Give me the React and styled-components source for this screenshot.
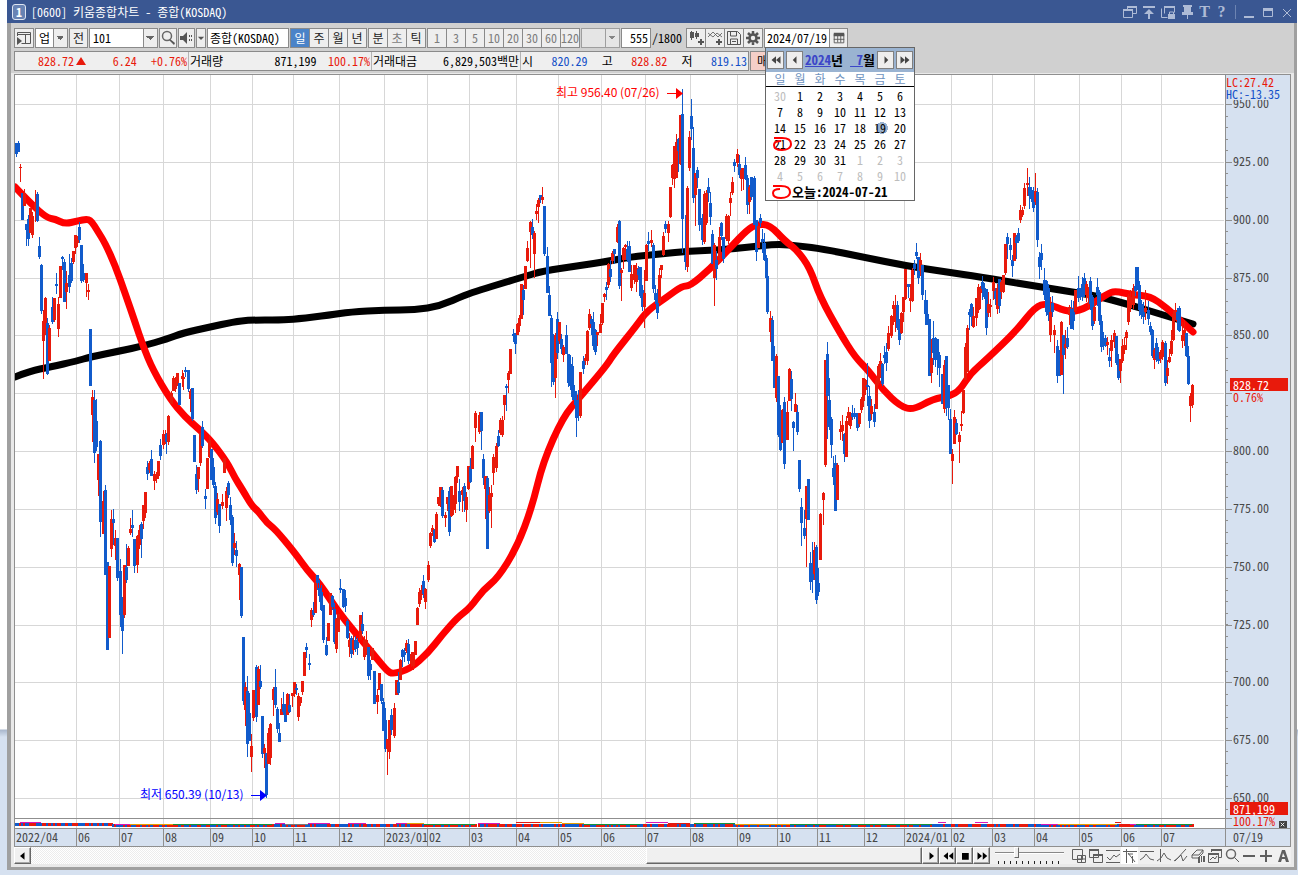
import { useState } from 'react';
import styled, { createGlobalStyle, css } from 'styled-components';

// d = down day, u = up day: x, high, body top, body bottom, low
const CANDLES = `
d16,143,143,154,157 d18,141,143,152,152 u20,164,167,168,182 d22,193,193,220,220 u24,189,193,206,206 d26,224,224,230,246
d28,215,219,239,246 u30,208,208,233,233 u32,212,216,235,238 u35,190,203,210,222 d37,192,194,221,222 d39,237,246,257,259
d41,264,265,311,314 u43,310,321,341,379 u45,297,298,331,335 d47,318,323,374,375 u49,325,328,361,361 d52,297,307,322,324
u54,298,298,320,322 d56,273,284,286,294 u58,297,304,329,337 u60,266,266,298,298 d62,256,257,259,270 d64,259,262,302,302
u66,271,283,292,309 d69,254,275,287,293 d71,258,263,281,283 u73,251,251,262,264 u75,235,235,248,254 u77,236,240,243,247
d79,222,227,240,243 d81,245,245,281,283 d83,264,273,280,282 u86,273,273,283,297 u88,284,290,292,300 d90,329,329,386,386
u92,390,397,415,442 d94,390,400,453,463 d96,399,421,447,451 u98,454,454,480,496 d100,440,441,522,537 u103,491,501,534,534
d105,485,490,575,575 d107,562,562,650,650 u109,566,566,638,638 u111,510,519,549,557 d113,509,519,523,545 u115,530,538,546,560
d117,538,538,578,581 d120,559,571,615,627 d122,597,597,631,654 u124,565,565,615,618 d126,544,567,580,583 u128,546,548,566,566
u130,518,529,533,535 d132,510,525,528,537 d134,539,539,566,573 u137,535,536,565,573 u139,525,530,545,549 d141,522,524,539,558
u143,505,505,521,529 u145,492,492,513,518 d147,461,467,474,480 u149,461,463,470,473 d151,450,459,476,476 u154,471,474,481,490
u156,472,475,479,483 u158,461,461,476,479 d160,439,445,456,460 u163,430,434,445,449 u165,430,434,442,444 d166,433,434,442,454
u168,415,416,442,445 u171,391,393,404,404 u173,376,378,391,391 u175,377,379,389,392 u177,373,373,383,386 d179,383,383,405,405
u182,370,376,379,387 u183,373,377,379,390 d185,367,370,372,377 d188,370,370,389,392 u190,389,391,399,412 d192,388,388,419,421
d194,435,435,462,462 d196,465,474,490,494 u198,467,467,479,492 u200,433,433,463,466 d202,421,427,446,448 d205,489,496,499,509
u207,458,458,489,489 u209,435,440,457,458 d211,449,449,480,480 d213,458,467,485,488 d215,482,486,518,524 u217,493,499,512,515
d219,504,504,526,533 u222,494,502,506,509 u224,458,458,473,473 u226,487,491,508,521 d228,481,483,495,498 d230,497,505,520,525
d232,515,517,563,566 u234,533,543,548,555 d236,541,550,556,567 u239,563,564,575,600 d241,567,567,616,618 d243,637,637,701,705
u245,682,687,710,726 d247,676,691,744,757 d249,693,713,741,741 u251,734,746,757,772 u253,690,690,718,721 d256,665,667,717,722
u258,666,669,705,705 d260,665,681,687,689 d262,716,716,754,758 u264,744,748,753,768 d266,753,753,795,798 u268,728,733,764,764
u270,723,724,758,765 u273,687,689,700,716 d275,669,687,705,708 d277,707,709,729,733 d279,723,733,742,742 u281,698,709,715,715
d283,692,704,712,715 d285,704,712,722,722 u287,693,694,715,715 d289,694,705,712,713 u292,693,693,696,707 u294,682,682,694,697
d296,684,688,690,695 u298,693,696,717,721 u300,697,697,703,706 u302,681,681,692,695 u304,652,652,676,676 d306,643,647,650,658
d309,654,663,665,670 u311,608,610,620,627 d313,602,610,615,617 u315,575,583,613,613 d317,575,575,583,590 d319,580,588,596,602
d321,585,592,610,611 d323,605,605,640,643 d326,637,645,655,656 u328,623,623,641,641 u330,593,593,615,615 d332,595,596,607,610
d334,603,609,642,644 u336,618,619,649,653 u338,614,614,632,632 d340,579,588,590,593 d343,589,589,607,608 d345,590,598,606,612
d347,619,621,638,639 u349,633,640,647,657 d351,636,638,654,658 u353,634,640,650,655 d355,636,640,649,652 d357,638,642,648,655
u360,615,615,640,640 d362,612,624,631,634 u364,636,640,657,660 u366,631,640,652,655 d368,647,647,676,680 d370,660,664,670,680
u372,648,648,660,660 d374,671,671,704,704 u377,689,695,702,714 u379,673,673,690,690 d381,684,684,701,704 d383,698,702,731,731
d385,708,720,749,752 u387,739,739,749,775 u389,720,720,752,759 d391,709,715,730,735 u394,703,708,736,738 u396,680,680,695,695
d398,672,682,693,695 u400,659,660,680,680 d402,649,650,657,667 d404,648,652,655,662 u406,640,643,651,653 d408,639,644,661,664
u411,652,654,664,667 u413,652,652,666,670 u415,641,641,655,655 u417,607,608,625,625 u419,588,592,604,607 u421,585,590,595,600
d423,575,581,594,598 u425,588,589,602,609 u428,561,565,580,582 u430,532,533,546,548 u432,525,528,532,536 d434,529,530,542,543
u436,512,514,539,539 u438,497,497,504,506 u440,487,487,506,507 d442,487,490,516,518 u445,512,515,518,527 u447,497,497,504,511
d449,487,491,532,536 u451,486,486,516,517 u453,495,495,510,515 u455,476,477,504,513 u457,466,466,477,483 d459,479,491,502,511
u462,487,490,495,512 d464,483,486,501,512 u466,492,497,510,522 u468,466,466,489,490 d470,458,467,482,483 u472,445,446,469,469
u475,411,413,428,442 u479,412,415,432,434 d481,412,412,431,450 d483,454,459,478,485 u485,476,476,489,519 d487,476,478,549,549
u489,487,495,511,513 u491,485,493,497,528 u493,454,457,473,485 u496,443,446,468,472 d498,430,436,446,447 u500,418,420,433,435
u502,416,420,435,437 u504,395,395,405,420 d506,384,386,388,411 u508,371,373,380,393 u510,349,349,374,374 d513,329,334,336,342
d515,333,333,344,354 u517,323,324,335,335 u519,315,318,326,332 u521,284,284,319,319 d523,285,290,300,315 u525,266,266,289,289
u527,241,248,261,262 u530,221,222,232,268 d532,219,227,235,239 u534,231,233,254,278 u536,204,211,214,220 u538,198,200,207,223
d540,195,195,200,203 u542,187,197,200,204 d544,206,206,254,256 d547,247,256,293,293 d549,286,295,316,316 d551,315,318,363,387
d553,334,335,382,385 u555,333,335,378,398 d557,312,319,353,359 u559,322,322,341,344 d561,334,339,349,354 u563,345,347,355,362
d566,325,335,354,354 d568,354,354,383,387 d570,355,364,386,390 d572,357,366,397,400 d574,385,391,400,405 d576,391,400,418,437
d578,390,400,410,421 u580,372,372,416,418 d583,356,361,369,374 u585,354,358,361,365 u587,330,331,361,365 u589,309,314,328,330
d591,316,319,324,335 d593,312,322,346,350 d595,329,330,352,355 u597,332,332,335,346 u600,314,324,333,333 u602,303,303,323,325
u604,293,294,297,302 d606,282,287,290,300 u608,263,264,285,288 d610,260,269,277,282 u612,251,253,261,264 d614,249,249,254,264
u617,224,227,242,243 d619,220,221,286,289 u621,268,270,273,301 u623,247,248,260,269 u625,244,245,247,260 d627,241,249,260,262
d629,241,246,272,272 u631,265,274,288,291 u634,265,265,280,284 u636,263,268,282,292 d638,266,269,275,280 d640,267,267,296,298
d642,285,290,307,311 u644,270,293,307,328 u646,244,245,281,281 d648,232,241,244,251 u651,230,240,243,247 d653,243,245,289,293
d655,285,293,300,304 d657,289,298,313,319 u659,268,275,303,304 u661,265,265,270,278 u663,232,236,255,256 d665,221,224,229,233
u668,221,224,233,242 u670,187,187,217,218 u672,164,165,178,185 u674,146,146,179,188 u676,134,142,178,178 d678,138,139,151,172
u680,115,115,164,165 d682,89,114,219,253 d685,215,255,262,270 u687,186,188,267,272 u689,131,137,168,171 d691,99,116,129,140
d693,127,148,198,203 u695,173,173,195,226 d697,167,170,178,188 d699,189,189,225,231 d702,214,218,240,245 u704,191,194,242,244
u706,190,193,223,225 d708,178,187,193,202 d710,192,203,217,225 d712,230,234,264,264 u714,243,245,278,306 d716,251,260,269,280
u719,227,237,263,263 d721,222,223,236,240 d723,237,237,259,263 u726,214,216,239,241 u728,215,216,241,244 u730,192,198,203,216
u732,177,182,193,195 d734,159,162,166,172 u737,149,154,163,167 d739,155,164,175,178 u741,168,170,179,191 u743,168,168,179,190
d745,157,165,179,180 d747,175,178,205,214 u749,185,187,202,214 d751,177,177,197,200 d754,176,178,225,225 d756,220,220,252,261
u758,226,226,248,248 d760,214,218,223,227 d762,229,239,242,253 d764,233,243,260,261 d766,255,258,278,279 d767,266,276,312,314
u770,311,318,332,342 d772,316,320,361,361 d774,346,360,388,388 u776,354,356,398,402 d778,376,376,435,437 d780,405,410,450,451
u782,409,410,443,443 d784,397,402,464,469 u787,401,412,440,440 u789,368,369,401,401 d791,371,379,399,411 d793,421,422,428,451
u795,393,404,412,412 d797,405,412,432,435 d799,460,460,489,492 d801,498,507,523,546 d804,510,528,536,539 u806,486,486,519,567
d808,479,479,520,520 d810,552,563,582,590 d812,542,565,580,593 u814,542,550,574,580 d816,545,547,600,604 d818,568,583,592,596
u820,513,514,560,560 u823,492,493,500,525 u825,360,360,465,467 d827,342,354,396,439 d829,378,400,427,430 d831,417,419,445,458
d833,456,468,477,485 d835,455,463,511,511 u837,463,465,500,500 u840,421,429,432,440 u842,415,425,431,441 d844,433,434,454,462
u846,416,421,457,457 u848,407,412,418,425 u850,412,416,426,429 d852,405,413,417,420 d854,408,413,417,419 d857,413,413,428,431
u859,413,413,424,427 u861,397,399,410,413 u863,378,378,401,407 u865,379,380,390,395 d867,363,385,387,406 d869,386,396,421,428
u871,399,406,414,420 d874,404,412,422,427 u876,378,380,409,409 u878,364,366,383,385 u880,353,361,375,378 d882,363,364,384,386
d884,346,355,358,364 d886,343,352,363,371 u888,326,333,349,351 u891,315,316,336,338 u893,301,305,309,325 u895,295,305,322,332
d897,301,305,328,330 d899,319,325,340,345 u901,312,313,333,334 u903,297,297,312,322 u905,269,269,299,300 d908,284,284,287,298
u910,284,298,301,312 u912,268,270,301,302 d914,260,264,269,275 d916,243,252,256,259 d918,257,257,278,284 u920,253,260,271,276
d922,265,265,295,300 d925,290,300,314,325 d927,300,314,325,325 d929,319,319,376,376 u931,339,358,373,383 d933,321,338,353,365
d935,337,338,360,367 d937,339,339,360,375 d939,352,355,368,387 d942,374,374,404,404 u944,360,365,409,413 d946,356,356,408,416
d948,385,385,408,420 d950,409,419,454,454 u952,449,454,461,484 u954,410,417,444,444 d956,419,423,434,435 u959,432,435,442,463
u961,411,424,426,431 u963,390,390,413,414 u965,343,347,380,380 u967,325,328,372,372 d969,309,312,315,330 d971,303,304,317,326
u973,307,316,327,328 u976,298,298,318,326 u978,284,287,310,313 u980,286,288,293,309 d982,276,282,289,300 d984,283,288,297,299
d986,289,289,328,335 u988,292,304,313,317 u990,299,305,307,317 u993,277,282,291,300 d995,288,291,299,305 u997,284,288,309,314
d999,279,279,306,313 u1001,280,282,292,299 u1003,275,275,292,293 u1005,244,244,273,275 d1007,233,237,244,259 d1010,238,245,250,260
d1012,255,260,266,277 u1014,233,233,261,261 d1016,235,237,243,259 d1018,228,233,241,243 u1020,205,210,220,223 u1022,207,210,215,217
u1024,183,188,206,209 u1027,168,183,185,196 d1029,177,187,196,209 d1031,187,190,199,202 d1033,187,191,208,212 u1035,173,191,202,205
d1037,188,192,240,247 d1039,252,257,267,279 d1041,244,253,260,270 d1044,268,280,295,300 d1046,280,281,312,316 d1048,284,288,315,321
u1050,297,312,335,342 d1052,296,303,312,317 u1054,325,330,335,353 d1057,340,346,376,383 d1059,350,352,376,376 u1061,321,322,375,375
d1063,335,335,355,394 u1065,330,344,348,359 d1067,327,338,347,349 u1069,305,307,315,325 d1071,300,309,329,329 d1073,301,312,321,330
u1075,290,290,311,312 d1078,276,288,298,302 d1080,288,290,296,300 d1082,277,284,297,301 d1084,273,278,290,297 u1086,281,284,295,302
u1088,287,290,298,308 d1090,277,281,304,310 d1092,295,297,326,330 u1094,301,307,321,324 d1097,278,287,295,306 d1099,290,292,321,325
d1101,315,321,347,352 d1103,332,338,346,350 d1105,335,338,346,347 u1107,337,342,345,355 d1109,348,357,361,367 u1111,335,340,351,367
u1114,330,333,342,348 d1116,336,336,363,365 d1118,354,360,378,380 u1120,359,359,371,383 u1122,339,346,361,363 u1124,337,345,350,354
u1126,330,332,338,350 u1128,294,296,322,325 u1130,290,297,308,312 u1133,284,288,305,309 d1135,267,286,291,296 d1137,267,267,288,290
d1139,281,285,310,316 d1141,300,304,315,319 d1143,302,311,317,324 u1145,290,308,312,320 d1148,301,310,319,325 d1150,322,326,332,335
d1152,329,330,356,358 u1154,348,350,360,369 d1156,338,343,359,362 d1158,347,356,361,364 u1160,350,352,359,363 u1162,340,342,357,360
d1165,341,343,383,386 u1167,360,368,376,384 u1169,349,357,362,363 u1171,330,341,354,356 u1173,311,314,340,341 u1175,303,310,316,320
d1177,308,312,320,330 d1179,306,308,331,332 u1182,322,335,341,348 u1184,320,330,341,346 d1186,333,333,356,357 d1188,346,356,384,385
u1190,393,396,406,422 u1192,384,385,405,408
`
  .trim()
  .split(/\s+/)
  .map(entry => {
    const [x, high, top, bottom, low] = entry.slice(1).split(',').map(Number);
    return { up: entry[0] === 'u', x, high, top, bottom, low };
  });

const LONG_AVERAGE =
  '15,377 30,371 50,367 77,361 90,357 120,351 143,346 167,339 183,333 210,327 233,322 250,320 280,320 297,319 330,315 350,312 385,310 415,310 440,306 465,295 480,290 503,283 523,277 543,271 577,266 610,261 630,257 660,254 690,251 720,250 750,247 777,244 800,246 823,249 863,257 907,266 947,272 980,277 1023,284 1060,290 1097,296 1127,304 1160,314 1193,324';

const SHORT_AVERAGE =
  '15,187 30,203 47,218 55,219 65,224 77,221 88,219 92,222 97,230 105,243 115,265 125,293 135,322 143,346 153,370 170,399 185,417 200,430 212,442 227,462 235,478 242,489 252,506 258,511 267,523 275,529 295,553 307,570 320,584 337,610 353,630 370,650 387,671 393,674 410,669 428,653 442,635 458,617 470,608 483,590 498,578 517,547 532,507 543,462 563,417 580,397 607,365 613,355 637,325 647,311 667,297 682,286 690,286 710,269 730,248 747,230 757,224 770,225 785,241 797,250 810,268 820,297 840,333 855,357 868,370 883,390 900,406 913,410 933,399 950,396 960,390 970,374 987,359 1017,330 1035,307 1047,303 1067,312 1083,310 1107,294 1115,291 1133,295 1150,296 1167,308 1183,323 1193,332';

// rounds the corners of a point list with quadratic curves through the midpoints
function smoothPath(points) {
  const list = points.split(' ').map(p => p.split(',').map(Number));
  const last = list[list.length - 1];
  const curves = list.slice(1, -1).map(([x, y], i) => {
    const [nextX, nextY] = list[i + 2];
    return `Q${x} ${y} ${(x + nextX) / 2} ${(y + nextY) / 2}`;
  });
  return `M${list[0].join(' ')}${curves.join('')}L${last.join(' ')}`;
}

const MONTHS = [
  ['2022/04', 61], ['06', 43], ['07', 44], ['08', 47], ['09', 42], ['10', 41], ['11', 46], ['12', 45],
  ['2023/01', 43], ['02', 42], ['03', 47], ['04', 42], ['05', 43], ['06', 44], ['07', 45], ['08', 47],
  ['09', 40], ['10', 40], ['11', 47], ['12', 40], ['2024/01', 47], ['02', 41], ['03', 42], ['04', 45],
  ['05', 42], ['06', 40], ['07', 64],
];

const MONTH_LINES = MONTHS.slice(0, -1).reduce((xs, [, w]) => [...xs, (xs[xs.length - 1] || 15) + w], []);

const PRICES = [
  ['950.00', 104], ['925.00', 162], ['900.00', 220], ['875.00', 278], ['850.00', 335], ['', 393],
  ['800.00', 451], ['775.00', 509], ['750.00', 567], ['725.00', 625], ['700.00', 682], ['675.00', 740], ['650.00', 798],
];

const MINOR_TICKS = Array.from({ length: 64 }, (_, i) => Math.round(81 + i * 11.56));

// volume averages that run over the thin bars
const VOLUME_LINES = [
  [20, 41, 822, '#d816b8'], [115, 130, 824, '#d816b8'], [130, 173, 824, '#e8a000'], [173, 272, 824, '#149438'],
  [275, 285, 823, '#d816b8'], [285, 308, 824, '#777'], [308, 330, 823, '#d816b8'], [348, 366, 823, '#d816b8'],
  [396, 407, 823, '#d816b8'], [407, 424, 823, '#e8a000'], [424, 475, 824, '#149438'], [478, 500, 823, '#d816b8'],
  [516, 540, 822, '#e01a10'], [540, 562, 822, '#e8a000'], [562, 584, 823, '#e8a000'], [584, 640, 824, '#149438'],
  [646, 668, 822, '#d816b8'], [668, 690, 823, '#e01a10'], [694, 735, 823, '#149438'], [735, 790, 824, '#e8a000'],
  [790, 932, 824, '#149438'], [938, 946, 822, '#d816b8'], [975, 988, 822, '#d816b8'], [1041, 1058, 824, '#d816b8'],
  [1058, 1117, 824, '#e8a000'], [1115, 1121, 822, '#e01a10'], [1130, 1136, 824, '#d816b8'], [1136, 1192, 824, '#149438'],
];

const WEEKS = [
  [30, 1, 2, 3, 4, 5, 6],
  [7, 8, 9, 10, 11, 12, 13],
  [14, 15, 16, 17, 18, 19, 20],
  [21, 22, 23, 24, 25, 26, 27],
  [28, 29, 30, 31, 1, 2, 3],
  [4, 5, 6, 7, 8, 9, 10],
];

const isOutside = (week, day) => (week === 0 && day > 20) || (week > 3 && day < 20);

function Glyph({ d, fill, size = 16, ...rest }) {
  return (
    <svg width={size} height={size} viewBox="0 0 16 16" fill="none" stroke="currentColor" aria-hidden="true" {...rest}>
      {d && <path d={d} />}
      {fill && <path d={fill} fill="currentColor" stroke="none" />}
    </svg>
  );
}

const TITLE_ICONS = [
  ['새 창', 'M5.5 5.5v-3h9v7h-4M1.5 5.5h9v8h-9z', 'M5 2h10v2H5zM1 5h10v2H1z'],
  ['위로', '', 'M2 2h12v2H2zM8 5l5 5H9v5H7v-5H3z'],
  ['잠금', 'M4.500 9.500v-7h10v6M1.500 4.500v9h6M9.500 10v-2h4v2', 'M4 2h11v2H4zM8 10h7v5H8z'],
  ['고정', '', 'M4 1h9v2h-1v5h2v3H9v4H8v-4H3V8h2V3H4z'],
];

const CHART_TOOLS = [
  ['창 추가', 'M1.500 1.500h10v10h-10zM6.500 7.500h8v7h-8zM10.500 8v6M7 11h7', ''],
  ['창 겹침', 'M1.500 1.500h9v8h-9zM5.500 6.500h9v8h-9z', 'M1 1h10v2H1zM5 6h10v2H5z'],
  ['영역', 'M1 2.500h14M1 14.500h14M2 9l3 3 4-5 2 2 4-3', ''],
  ['십자선', 'M1 3.500h14M4.500 1v14M6 5l7 9M10.500 8v7M6 6h5', ''],
  ['수평선', 'M1 3.500h14M1 12l4-3 2-3 4 5 4 1', ''],
  ['수직선', 'M4.500 1v13M1 13l4-3 3-5 3 5 4 2', ''],
  ['추세선', 'M2 13L13 1M1 13l4-3 3-3 2 6 4-5', ''],
  ['지우개', 'M2 7l5-5h6l-4 5zM2 7v3h6l5-5V2', 'M8 9h2v6H8zM11 8h1v6h-1zM13 8h2v6h-2z'],
  ['복사', 'M4.500 4v-2.500h10v8h-3M1.500 5.500h10v9h-10zM3 12l3-3 2 2 2-3', 'M1 5h11v2H1zM4 1h11v2H4z'],
  ['확대', 'M10 9l5 5', ''],
  ['축소', '', 'M2 7h12v2H2z'],
  ['늘리기', '', 'M2 7h5V2h2v5h5v2H9v5H7V9H2z'],
  ['자동', '', 'M7 2h3l4 12h-3l-1-3H7l-1 3H3zM8 5L7 9h3z'],
];

function PriceChart() {
  return (
    <Plot viewBox="15 75 1210 743" preserveAspectRatio="none" role="img" aria-label="종합(KOSDAQ) 일봉">
      <g fill="#d7d7d7" shapeRendering="crispEdges">
        {MONTH_LINES.map(x => (
          <rect key={x} x={x} y="75" width="1" height="743" />
        ))}
        {PRICES.map(([, y]) => (
          <rect key={y} x="15" y={y} width="1209" height="1" />
        ))}
      </g>
      <g fill="none" strokeWidth="7" strokeLinejoin="round" strokeLinecap="round">
        <path d={smoothPath(LONG_AVERAGE)} stroke="#000" />
        <path d={smoothPath(SHORT_AVERAGE)} stroke="#f00" />
      </g>
      <g shapeRendering="crispEdges">
        {CANDLES.map(c => (
          <g key={c.x} fill={c.up ? '#e81a0c' : '#115bcb'}>
            <rect x={c.x} y={c.high} width="1" height={Math.max(c.low - c.high, 1)} />
            <rect x={c.x - 1} y={c.top} width="3" height={Math.max(c.bottom - c.top, 1)} />
          </g>
        ))}
      </g>
      <Note fill="#f00">
        <text x="556" y="97">최고 956.40 (07/26)</text>
        <path d="M667 93h9v-5l7 5.500-7 5.500v-5h-9z" />
      </Note>
      <Note fill="#00f">
        <text x="140" y="799">최저 650.39 (10/13)</text>
        <path d="M251 795h9v-5l7 5.500-7 5.500v-5h-9z" />
      </Note>
    </Plot>
  );
}

function VolumeChart() {
  return (
    <Plot viewBox="15 819 1210 9" preserveAspectRatio="none" shapeRendering="crispEdges" aria-hidden="true">
      {MONTH_LINES.map(x => (
        <rect key={x} x={x} y="819" width="1" height="9" fill="#d7d7d7" />
      ))}
      {CANDLES.map((c, i) => (
        <rect key={c.x} x={c.x - 1} y={i < 46 ? 823 : 824} width="3" height="3" fill={c.up ? '#e81a0c' : '#115bcb'} />
      ))}
      {VOLUME_LINES.map(([from, to, y, color]) => (
        <rect key={from} x={from} y={y} width={to - from} height="1" fill={color} />
      ))}
    </Plot>
  );
}

function PriceScale() {
  return (
    <Scale>
      <Plot viewBox="1225 75 65 753" preserveAspectRatio="none">
        <g fill="#8f8f8f" shapeRendering="crispEdges">
          <rect x="1225" y="75" width="1" height="753" />
          {MINOR_TICKS.map(y => (
            <rect key={y} x="1226" y={y} width="2" height="1" />
          ))}
          {PRICES.map(([, y]) => (
            <rect key={y} x="1226" y={y} width="6" height="1" />
          ))}
          <rect x="1225" y="818" width="7" height="1" />
        </g>
        <g fill="#484848">
          {PRICES.map(([label, y]) => (
            <text key={y} x="1233" y={y + 4}>
              {label}
            </text>
          ))}
        </g>
      </Plot>
      <ScaleHead>
        <Up>LC:27.42</Up>
        <Down>HC:-13.35</Down>
      </ScaleHead>
      <ScaleMark style={{ top: '303px' }}>
        <b>828.72</b>
        <span>0.76%</span>
      </ScaleMark>
      <ScaleMark style={{ top: '727px' }}>
        <b>871,199</b>
        <span>100.17%</span>
      </ScaleMark>
      <ClosePane aria-label="거래량 닫기">
        <Glyph size={7} d="M4 4l8 8M12 4l-8 8" strokeWidth="2" />
      </ClosePane>
    </Scale>
  );
}

function TodayRing() {
  return (
    <Ring viewBox="0 0 20 14" aria-hidden="true">
      <path d="M1 1h8c6 0 9 2 9 6s-4 6-9 6-8-2-8-5 3-4 7-4" />
    </Ring>
  );
}

function Lens() {
  return (
    <LensSvg viewBox="0 0 16 16" aria-hidden="true">
      <circle cx="7" cy="6" r="4.500" />
    </LensSvg>
  );
}

function Calendar({ selected, onSelect }) {
  return (
    <Popup>
      <CalendarHead>
        <NavButton aria-label="이전 해">
          <Glyph size={12} fill="M8 3v10L2 8zM14 3v10L8 8z" />
        </NavButton>
        <NavButton aria-label="이전 달">
          <Glyph size={12} fill="M10 3v10L5 8z" />
        </NavButton>
        <CalendarTitle>
          <span>
            <u>2024</u>년
          </span>
          <span>
            <u>&nbsp;7</u>월
          </span>
        </CalendarTitle>
        <NavButton aria-label="다음 달">
          <Glyph size={12} fill="M6 3v10l5-5z" />
        </NavButton>
        <NavButton aria-label="다음 해">
          <Glyph size={12} fill="M2 3v10l6-5zM8 3v10l6-5z" />
        </NavButton>
      </CalendarHead>
      <CalendarBody>
        <table>
          <thead>
            <tr>
              {['일', '월', '화', '수', '목', '금', '토'].map(day => (
                <th key={day}>{day}</th>
              ))}
            </tr>
          </thead>
          <tbody>
            {WEEKS.map((week, row) => (
              <tr key={row}>
                {week.map(day => {
                  const outside = isOutside(row, day);
                  return (
                    <td key={day}>
                      <Day $outside={outside} $selected={!outside && day === selected} onClick={() => onSelect(day)}>
                        {day}
                      </Day>
                      {!outside && day === 21 && <TodayRing />}
                    </td>
                  );
                })}
              </tr>
            ))}
          </tbody>
        </table>
        <Today>
          <TodayRing />
          오늘:2024-07-21
        </Today>
      </CalendarBody>
    </Popup>
  );
}

export default function App() {
  const [period, setPeriod] = useState('일');
  const [day, setDay] = useState(19);

  return (
    <Page>
      <GlobalStyle />
      <TitleBar>
        <WindowNumber>1</WindowNumber>
        <WindowTitle>[0600] 키움종합차트 - 종합(KOSDAQ)</WindowTitle>
        <TitleButtons>
          {TITLE_ICONS.map(([label, d, fill]) => (
            <TitleButton key={label} aria-label={label}>
              <Glyph d={d} fill={fill} />
            </TitleButton>
          ))}
          <TitleButton $glyph>T</TitleButton>
          <TitleButton $glyph>?</TitleButton>
          <TitleRule />
          <TitleButton aria-label="최소화">
            <Glyph fill="M3 12h10v2H3z" />
          </TitleButton>
          <TitleButton aria-label="최대화">
            <Glyph d="M3.500 4.500h9v8h-9z" fill="M3 4h10v3H3z" />
          </TitleButton>
          <TitleButton aria-label="닫기">
            <Glyph d="M4 5l8 8M12 5l-8 8" />
          </TitleButton>
        </TitleButtons>
      </TitleBar>
      <Frame>
        <TopPanel>
          <Toolbar>
            <ToolButton $w={20} aria-label="메뉴">
              <Glyph d="M1.500 6v-3.500h13v11h-9M9.500 5v8M2 4.500h12" fill="M1 7l5 4-5 4z" />
            </ToolButton>
            <Select aria-label="구분" $w={33} defaultValue="업">
              <option>업</option>
            </Select>
            <ToolButton $w={19}>전</ToolButton>
            <Select aria-label="종목코드" $w={69} defaultValue="101">
              <option>101</option>
            </Select>
            <ToolButton $w={18} aria-label="검색">
              <Glyph fill="M10 9l5 4-1 2-5-5z" />
              <Lens />
            </ToolButton>
            <ToolButton $w={17} aria-label="소리">
              <Glyph fill="M1 6h3l4-4v12l-4-4H1zM10 5h1v2h-1zM12 5h1v2h-1zM10 9h1v2h-1zM12 9h1v2h-1z" />
            </ToolButton>
            <ToolButton $w={10} aria-label="소리 설정">
              <Glyph size={10} fill="M3 6h10l-5 5z" />
            </ToolButton>
            <Field aria-label="종목명" $w={82} defaultValue="종합(KOSDAQ)" />
            <Group>
              {['일', '주', '월', '년'].map(name => (
                <ToolButton key={name} $w={20} $active={name === period} onClick={() => setPeriod(name)}>
                  {name}
                </ToolButton>
              ))}
            </Group>
            <Group>
              <ToolButton $w={20}>분</ToolButton>
              <ToolButton $w={20} $dim>초</ToolButton>
              <ToolButton $w={20}>틱</ToolButton>
            </Group>
            <Group>
              {['1', '3', '5', '10', '20', '30', '60', '120'].map(n => (
                <ToolButton key={n} $w={20} $dim>
                  {n}
                </ToolButton>
              ))}
            </Group>
            <Select aria-label="주기" $w={39} disabled />
            <Field aria-label="표시 개수" $w={30} $right defaultValue="555" />
            <Total>/1800</Total>
            <Group>
              <ToolButton $w={20} aria-label="봉 추가">
                <Glyph d="M3.500 1v9M8.500 1v8" fill="M2 2h4v6H2zM7 3h4v4H7zM12 9h2v2h2v2h-2v2h-2v-2h-2v-2h2z" />
              </ToolButton>
              <ToolButton $w={20} aria-label="지표 추가">
                <Glyph d="M1 7l5-5 5 5 4-4M1 3l5 4 4-4 5 4" strokeWidth=".8" fill="M11 9h2v2h2v2h-2v2h-2v-2H9v-2h2z" />
              </ToolButton>
              <ToolButton $w={20} aria-label="저장">
                <Glyph d="M1.500 1.500h10l3 3v10h-13zM4.500 2v4h6v-4M4.500 14v-5h7v5M6 11.500h4" />
              </ToolButton>
              <ToolButton $w={20} aria-label="설정">
                <Glyph
                  d="M8 1v3M8 12v3M1 8h3M12 8h3M3 3l2 2M11 11l2 2M13 3l-2 2M5 11l-2 2M8 4.500a3.500 3.500 0 100 7 3.500 3.500 0 000-7z"
                  strokeWidth="2.500"
                />
              </ToolButton>
            </Group>
            <DateBox>
              <Field aria-label="날짜" $w={66} value={`2024/07/${day}`} readOnly />
              <ToolButton $w={19} aria-label="달력">
                <Glyph size={14} d="M2.500 3.500h11v10h-11zM6.500 5v8M10 5v8M2 9.500h12" fill="M2 2h12v4H2z" />
              </ToolButton>
              <Calendar selected={day} onSelect={setDay} />
            </DateBox>
          </Toolbar>
          <QuoteRow>
            <Quotes>
              <Quote $w={173}>
                <Value $w={58} $tone="up">828.72</Value>
                <Arrow viewBox="0 0 10 8">
                  <path d="M5 0l5 8H0z" />
                </Arrow>
                <Value $w={48} $tone="up">6.24</Value>
                <Value $w={48} $tone="up">+0.76%</Value>
              </Quote>
              <Quote $w={183}>
                <span>거래량</span>
                <Value $w={90}>871,199</Value>
                <Value $w={50} $tone="up">100.17%</Value>
              </Quote>
              <Quote $w={149}>
                <span>거래대금</span>
                <Value $w={96}>6,829,503백만</Value>
              </Quote>
              <Quote $w={228}>
                <span>시</span>
                <Value $w={52} $tone="down">820.29</Value>
                <Label>고</Label>
                <Value $w={52} $tone="up">828.82</Value>
                <Label>저</Label>
                <Value $w={52} $tone="down">819.13</Value>
              </Quote>
            </Quotes>
            <SellBox>매</SellBox>
          </QuoteRow>
        </TopPanel>
        <ChartFrame>
          <Charts>
            <PricePane>
              <PriceChart />
            </PricePane>
            <VolumePane>
              <VolumeChart />
            </VolumePane>
          </Charts>
          <PriceScale />
          <TimeAxis>
            {MONTHS.map(([label], i) => (
              <Month key={i}>{label}</Month>
            ))}
          </TimeAxis>
          <LastDate>07/19</LastDate>
        </ChartFrame>
        <BottomBar>
          <ScrollButton aria-label="왼쪽">
            <Glyph size={12} fill="M10 3v10L4 8z" />
          </ScrollButton>
          <Track>
            <Thumb />
          </Track>
          <ScrollButton aria-label="오른쪽">
            <Glyph size={12} fill="M6 3v10l6-5z" />
          </ScrollButton>
          <ScrollButton aria-label="뒤로">
            <Glyph size={12} fill="M8 3v10L2 8zM15 3v10L9 8z" />
          </ScrollButton>
          <ScrollButton aria-label="정지">
            <Glyph size={12} fill="M4 4h9v9H4z" />
          </ScrollButton>
          <ScrollButton aria-label="앞으로">
            <Glyph size={12} fill="M2 3v10l6-5zM9 3v10l6-5z" />
          </ScrollButton>
          <SpeedBox>
            <Speed type="range" min="0" max="10" defaultValue="3" aria-label="속도" />
          </SpeedBox>
          <ChartTools>
            {CHART_TOOLS.map(([label, d, fill]) => (
              <ChartTool key={label} aria-label={label} $active={label === '십자선'}>
                <Glyph d={d} fill={fill} fillRule="evenodd" />
                {label === '확대' && <Lens />}
              </ChartTool>
            ))}
          </ChartTools>
        </BottomBar>
      </Frame>
    </Page>
  );
}

const RED = '#e81a0c';
const BLUE = '#1450c8';
const PALE = '#d6e1f0';

const GlobalStyle = createGlobalStyle`
  * {
    box-sizing: border-box;
  }
  body {
    margin: 0;
    background: ${PALE};
  }
  body, button, input, select {
    color: #000;
    font: 12px/16px 'Noto Sans Mono CJK KR', 'Noto Sans CJK KR', sans-serif;
  }
  button {
    padding: 0;
    border: 0;
    background: none;
  }
`;

const Page = styled.div`
  display: flex;
  flex-direction: column;
  min-height: 100vh;
  padding: 0 1px 5px 7px;
  background: linear-gradient(#fff 729px, #a9b7cc 730px, ${PALE} 737px);
`;

const TitleBar = styled.header`
  display: flex;
  align-items: center;
  height: 23px;
  padding: 0 1px 0 5px;
  color: #fff;
  background: #3a5792;
`;

const WindowNumber = styled.b`
  width: 14px;
  height: 16px;
  margin-right: 5px;
  border: 1px solid #dfe6f2;
  border-radius: 3px;
  background: #6883b4;
  line-height: 14px;
  text-align: center;
`;

const WindowTitle = styled.h1`
  flex: 1;
  margin: 0;
  font-size: 12px;
  font-weight: normal;
`;

const TitleButtons = styled.div`
  display: flex;
  align-items: center;
`;

const TitleButton = styled.button`
  display: flex;
  align-items: center;
  justify-content: center;
  width: 19px;
  height: 18px;
  color: #aebbd6;
  ${p =>
    p.$glyph &&
    css`
      width: 17px;
      font: bold 16px 'Liberation Serif', serif;
    `}
`;

const TitleRule = styled.i`
  width: 1px;
  height: 14px;
  margin: 0 3px 0 5px;
  background: #6d84b2;
`;

const Frame = styled.main`
  display: flex;
  flex: 1;
  flex-direction: column;
  border: solid #a0a0a0;
  border-width: 0 3px 3px 4px;
  background: #e9e9e9;
`;

const TopPanel = styled.div`
  display: flex;
  flex-direction: column;
  gap: 3px;
  padding: 5px 3px 2px;
  background: #d0d0d0;
`;

const Toolbar = styled.div`
  display: flex;
  align-items: stretch;
  gap: 1px;
  height: 20px;
`;

const Group = styled.div`
  display: flex;
  > * + * {
    margin-left: -1px;
  }
`;

const boxed = css`
  width: ${p => p.$w}px;
  flex: none;
  border: 1px solid #8a8a8a;
`;

const ToolButton = styled.button`
  ${boxed}
  position: relative;
  display: flex;
  align-items: center;
  justify-content: center;
  background: ${p => (p.$active ? '#4a83c8' : '#eee')};
  color: ${p => (p.$active ? '#fff' : p.$dim ? '#7c7c7c' : '#222')};
  svg {
    flex: none;
    color: #555;
  }
`;

const Select = styled.select`
  ${boxed}
  padding: 0 3px;
  appearance: none;
  border-radius: 0;
  background: conic-gradient(from -45deg at 50% 100%, #666 90deg, transparent 0) right 3px center / 8px 4px no-repeat,
    linear-gradient(90deg, #8a8a8a 1px, #eee 1px) right / 14px 100% no-repeat,
    ${p => (p.disabled ? '#eee' : '#fff')};
`;

const Field = styled.input`
  ${boxed}
  padding: 0 2px;
  background: #fff;
  text-align: ${p => (p.$right ? 'right' : 'left')};
`;

const Total = styled.span`
  width: 33px;
  line-height: 20px;
`;

const LensSvg = styled.svg`
  position: absolute;
  width: 16px;
  height: 16px;
  fill: none;
  stroke: #666;
  stroke-width: 1.500;
`;

const DateBox = styled.div`
  position: relative;
  display: flex;
  > * + button {
    margin-left: -1px;
  }
`;

const Popup = styled.div`
  position: absolute;
  top: 19px;
  left: 1px;
  z-index: 2;
  width: 150px;
  border: 1px solid #666;
  background: #fff;
`;

const CalendarHead = styled.div`
  display: flex;
  align-items: center;
  gap: 2px;
  height: 24px;
  padding: 0 1px;
  background: #9ab3d1;
`;

const NavButton = styled.button`
  display: flex;
  align-items: center;
  justify-content: center;
  width: 17px;
  height: 18px;
  border: 1px solid #808080;
  background: #eee;
  color: #444;
`;

const CalendarTitle = styled.div`
  display: flex;
  flex: 1;
  justify-content: space-between;
  font-weight: bold;
  font-size: 13px;
  u {
    color: #3c46c8;
  }
`;

const CalendarBody = styled.div`
  position: relative;
  padding: 0 4px;
  &::before {
    position: absolute;
    top: 14px;
    right: 0;
    left: 0;
    height: 1px;
    background: #000;
    content: '';
  }
  table {
    width: 100%;
    border-collapse: collapse;
    table-layout: fixed;
  }
  th {
    height: 16px;
    padding: 0 0 2px;
    color: #7094c0;
    font-weight: normal;
    line-height: 14px;
  }
  td {
    position: relative;
    height: 16px;
    padding: 0;
  }
`;

const Day = styled.button`
  display: block;
  width: 100%;
  line-height: 16px;
  color: ${p => (p.$outside ? '#bdbdbd' : '#000')};
  background: ${p => (p.$selected ? 'radial-gradient(circle at 12px 8px, #9ab3d1 6px, transparent 6px)' : 'none')};
`;

const Ring = styled.svg`
  width: 20px;
  height: 14px;
  fill: none;
  stroke: #f00;
  stroke-width: 2;
  td & {
    position: absolute;
    top: 1px;
    left: 3px;
  }
`;

const Today = styled.div`
  display: flex;
  align-items: center;
  height: 16px;
  padding-left: 2px;
  font-size: 13px;
  font-weight: bold;
`;

const QuoteRow = styled.div`
  display: flex;
  gap: 1px;
  height: 20px;
  line-height: 18px;
`;

const Quotes = styled.div`
  display: flex;
  border: 1px solid #8a8a8a;
  background: #efefef;
`;

const Quote = styled.div`
  display: flex;
  align-items: center;
  justify-content: space-between;
  width: ${p => p.$w}px;
  padding: 0 1px;
  white-space: nowrap;
  & + & {
    border-left: 1px solid #b4b4b4;
  }
`;

const Value = styled.span`
  width: ${p => p.$w}px;
  text-align: right;
  color: ${p => ({ up: RED, down: BLUE })[p.$tone] || '#000'};
`;

const Label = styled.span`
  margin-left: 12px;
`;

const Arrow = styled.svg`
  width: 10px;
  height: 8px;
  fill: ${RED};
`;

const SellBox = styled.div`
  width: 60px;
  padding-left: 6px;
  border: 1px solid #8a8a8a;
  background: #f5cfc8;
`;

const ChartFrame = styled.section`
  display: grid;
  flex: 1;
  grid-template-rows: minmax(0, 1fr) 19px;
  grid-template-columns: minmax(0, 1fr) 65px;
  margin: 1px 3px 0;
  border: solid #8f8f8f;
  border-width: 1px 1px 0;
`;

const Charts = styled.div`
  display: flex;
  flex-direction: column;
  background: #fff;
`;

const Plot = styled.svg`
  position: absolute;
  display: block;
  width: 100%;
  height: 100%;
`;

const Note = styled.g`
  font-family: 'Noto Sans CJK KR', sans-serif;
`;

const PricePane = styled.div`
  position: relative;
  flex: 1;
`;

const VolumePane = styled.div`
  position: relative;
  height: 10px;
  border-top: 1px solid #8f8f8f;
`;

const Scale = styled.div`
  position: relative;
  overflow: hidden;
  background: ${PALE};
`;

const ScaleHead = styled.div`
  position: absolute;
  top: 1px;
  left: 1px;
  display: flex;
  flex-direction: column;
  line-height: 12px;
  background: ${PALE};
`;

const Up = styled.span`
  color: ${RED};
`;

const Down = styled.span`
  color: ${BLUE};
`;

const ScaleMark = styled.div`
  position: absolute;
  right: 2px;
  left: 5px;
  display: flex;
  flex-direction: column;
  color: ${RED};
  line-height: 11px;
  b {
    padding-left: 3px;
    background: ${RED};
    color: #fff;
    font-weight: normal;
    line-height: 13px;
  }
  span {
    padding-left: 3px;
  }
`;

const ClosePane = styled.button`
  position: absolute;
  right: 3px;
  bottom: 0;
  display: flex;
  width: 8px;
  height: 7px;
  background: #444;
  color: #fff;
`;

const TimeAxis = styled.div`
  display: grid;
  grid-template-columns: ${MONTHS.map(([, w]) => `minmax(0, ${w}fr)`).join(' ')};
  border: solid #8f8f8f;
  border-width: 1px 0;
  background: ${PALE};
`;

const Month = styled.span`
  padding-left: 1px;
  color: #484848;
  white-space: nowrap;
  & + & {
    border-left: 1px solid #8f8f8f;
  }
`;

const LastDate = styled.div`
  padding-left: 7px;
  border: solid #8f8f8f;
  border-width: 1px 0 1px 1px;
  background: ${PALE};
  color: #484848;
`;

const BottomBar = styled.footer`
  display: flex;
  height: 17px;
  margin: 0 3px 3px;
  background: #f0f0f0;
`;

const raised = css`
  border: 1px solid;
  border-color: #fff #666 #666 #fff;
  background: #f0f0f0;
  box-shadow: inset -1px -1px #a8a8a8;
`;

const ScrollButton = styled.button`
  ${raised}
  display: flex;
  align-items: center;
  justify-content: center;
  width: 17px;
`;

const Track = styled.div`
  display: flex;
  flex: 1;
  justify-content: flex-end;
  background: repeating-conic-gradient(#fff 0 25%, #ececec 0 50%) 0 0 / 2px 2px;
`;

const Thumb = styled.div`
  ${raised}
  width: 31%;
`;

const SpeedBox = styled.div`
  display: flex;
  align-items: flex-start;
  width: 69px;
  margin: 0 6px 0 5px;
  background: repeating-linear-gradient(90deg, #222 0 1px, transparent 1px 6px) 3px 14px / 66px 3px no-repeat;
`;

const Speed = styled.input`
  width: 100%;
  height: 11px;
  margin: 0;
  appearance: none;
  background: linear-gradient(#888 1px, #fff 1px) 0 5px / 100% 2px no-repeat;
  &::-webkit-slider-thumb {
    width: 5px;
    height: 11px;
    appearance: none;
    border: 1px solid;
    border-color: #fff #666 #666 #fff;
    background: #eee;
  }
`;

const ChartTools = styled.div`
  display: flex;
`;

const ChartTool = styled.button`
  position: relative;
  display: flex;
  align-items: center;
  justify-content: center;
  width: 17px;
  color: #5e5e5e;
  background: ${p => (p.$active ? '#fff' : 'none')};
`;
